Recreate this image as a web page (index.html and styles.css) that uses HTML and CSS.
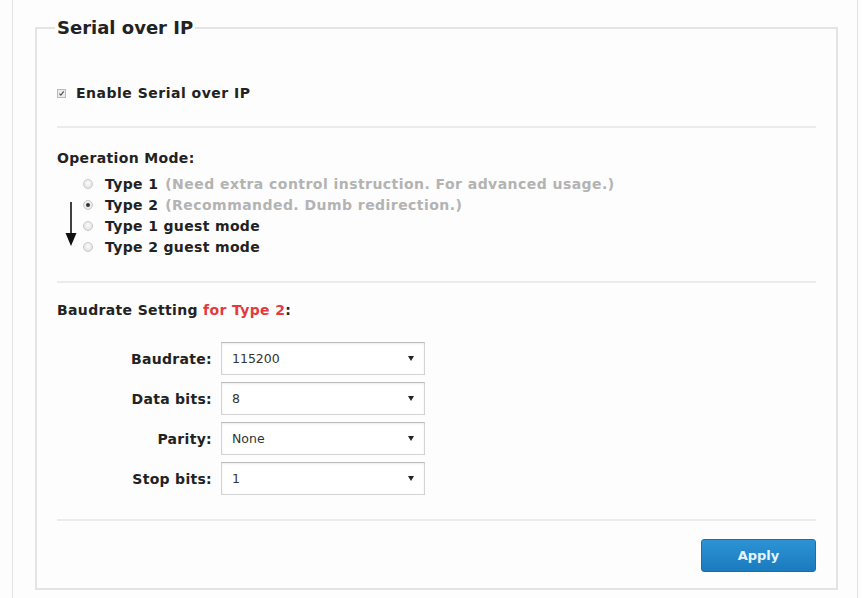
FILE: index.html
```html
<!DOCTYPE html>
<html>
<head>
<meta charset="utf-8">
<title>Serial over IP</title>
<link rel="stylesheet" href="styles.css">
</head>
<body>
<div class="page">
  <fieldset class="panel">
    <legend>Serial over IP</legend>

    <label class="enable">
      <span class="cb"><svg viewBox="0 0 9 9" width="9" height="9"><path d="M1.8 4.6 L3.7 6.6 L7.4 1.8" fill="none" stroke="#555" stroke-width="1.6"/></svg></span>
      Enable Serial over IP
    </label>

    <hr class="sep sep-a">

    <div class="heading h-mode">Operation Mode:</div>
    <div class="modes">
      <div class="mode"><span class="radio"></span><span class="lbl">Type 1</span><span class="hint">(Need extra control instruction. For advanced usage.)</span></div>
      <div class="mode"><span class="radio on"></span><span class="lbl">Type 2</span><span class="hint">(Recommanded. Dumb redirection.)</span></div>
      <div class="mode"><span class="radio"></span><span class="lbl">Type 1 guest mode</span></div>
      <div class="mode"><span class="radio"></span><span class="lbl">Type 2 guest mode</span></div>
      <svg class="arrow" viewBox="0 0 12 44" width="12" height="44"><line x1="6" y1="0" x2="6" y2="33" stroke="#111" stroke-width="1.6"/><polygon points="0.5,31 11.5,31 6,44" fill="#111"/></svg>
    </div>

    <hr class="sep sep-b">

    <div class="heading h-baud">Baudrate Setting <span class="red">for Type 2</span>:</div>

    <div class="form">
      <div class="flabel">Baudrate:</div>
      <div class="select"><span class="val">115200</span><span class="caret"></span></div>
      <div class="flabel">Data bits:</div>
      <div class="select"><span class="val">8</span><span class="caret"></span></div>
      <div class="flabel">Parity:</div>
      <div class="select"><span class="val">None</span><span class="caret"></span></div>
      <div class="flabel">Stop bits:</div>
      <div class="select"><span class="val">1</span><span class="caret"></span></div>
    </div>

    <hr class="sep sep-c">

    <div class="actions"><button class="apply">Apply</button></div>
  </fieldset>
</div>
</body>
</html>
```

FILE: styles.css
```css
html, body {
  margin: 0;
  background: #fdfdfd;
}
body {
  font-family: "DejaVu Sans", Verdana, sans-serif;
  color: #222;
}
.page {
  box-sizing: border-box;
  margin-left: 12px;
  width: 846px;
  height: 598px;
  border-left: 1px solid #e2e2e2;
  border-right: 1px solid #e2e2e2;
  padding: 18px 19px 0 22px;
  background: #fdfdfd;
}
.panel {
  margin: 0;
  min-width: 0;
  border: 2px solid #e4e4e4;
  padding: 0 20px 16px;
  background: #fdfdfd;
}
.panel legend {
  font-size: 18px;
  line-height: 20px;
  font-weight: bold;
  color: #222;
  padding: 0 2px;
  margin-left: -2px;
}
.enable {
  display: flex;
  align-items: center;
  margin-top: 45px;
  height: 20px;
  font-size: 14px;
  font-weight: bold;
  letter-spacing: 0.5px;
}
.cb {
  box-sizing: border-box;
  width: 9px;
  height: 9px;
  margin-right: 10px;
  border: 1px solid #b9b9b9;
  background: #ececec;
  display: flex;
  align-items: center;
  justify-content: center;
}
.cb svg { display: block; }
.sep {
  border: 0;
  border-top: 2px solid #ebebeb;
  height: 0;
  margin: 0;
}
.sep-a { margin-top: 23px; }
.sep-b { margin-top: 24px; }
.sep-c { margin-top: 24px; }
.heading {
  font-size: 14px;
  line-height: 20px;
  font-weight: bold;
  letter-spacing: 0.35px;
}
.h-mode { margin-top: 20px; }
.h-baud { margin-top: 17px; }
.red { color: #e23a3f; }
.modes {
  position: relative;
  margin-top: 5px;
}
.mode {
  display: flex;
  align-items: center;
  height: 21px;
  padding-left: 26px;
  font-size: 14px;
  font-weight: bold;
  letter-spacing: 0.35px;
  white-space: pre;
}
.radio {
  box-sizing: border-box;
  width: 10px;
  height: 10px;
  border-radius: 50%;
  border: 1px solid #c9c9c9;
  background: radial-gradient(circle at 50% 40%, #fbfbfb, #dcdcdc);
  margin-right: 12px;
  flex: none;
  display: flex;
  align-items: center;
  justify-content: center;
}
.radio.on::after {
  content: "";
  width: 4px;
  height: 4px;
  border-radius: 50%;
  background: #333;
}
.hint {
  color: #b3b3b3;
  margin-left: 7px;
  letter-spacing: 0.45px;
}
.arrow {
  position: absolute;
  left: 8px;
  top: 29px;
}
.form {
  display: grid;
  grid-template-columns: 155px 204px;
  column-gap: 9px;
  row-gap: 7px;
  margin-top: 22px;
  align-items: center;
}
.flabel {
  text-align: right;
  font-size: 14px;
  font-weight: bold;
  letter-spacing: 0.3px;
}
.select {
  box-sizing: border-box;
  height: 33px;
  display: flex;
  align-items: center;
  padding: 0 10px 0 10px;
  border: 1px solid #d3d3d3;
  border-top-color: #bdbdbd;
  box-shadow: inset 0 1px 2px rgba(0,0,0,0.08);
  background: #fff;
  font-size: 12.5px;
  color: #333;
}
.val { flex: 1; }
.caret {
  width: 0;
  height: 0;
  border-left: 3px solid transparent;
  border-right: 3px solid transparent;
  border-top: 5px solid #222;
}
.actions {
  display: flex;
  justify-content: flex-end;
  margin-top: 18px;
}
.apply {
  width: 115px;
  height: 33px;
  border: 1px solid #1a6ea9;
  border-radius: 3px;
  background: linear-gradient(#2d93d4, #1a7bbf);
  color: #e6f3ff;
  font-family: "DejaVu Sans", Verdana, sans-serif;
  font-size: 13px;
  font-weight: bold;
  padding: 0;
}
```
